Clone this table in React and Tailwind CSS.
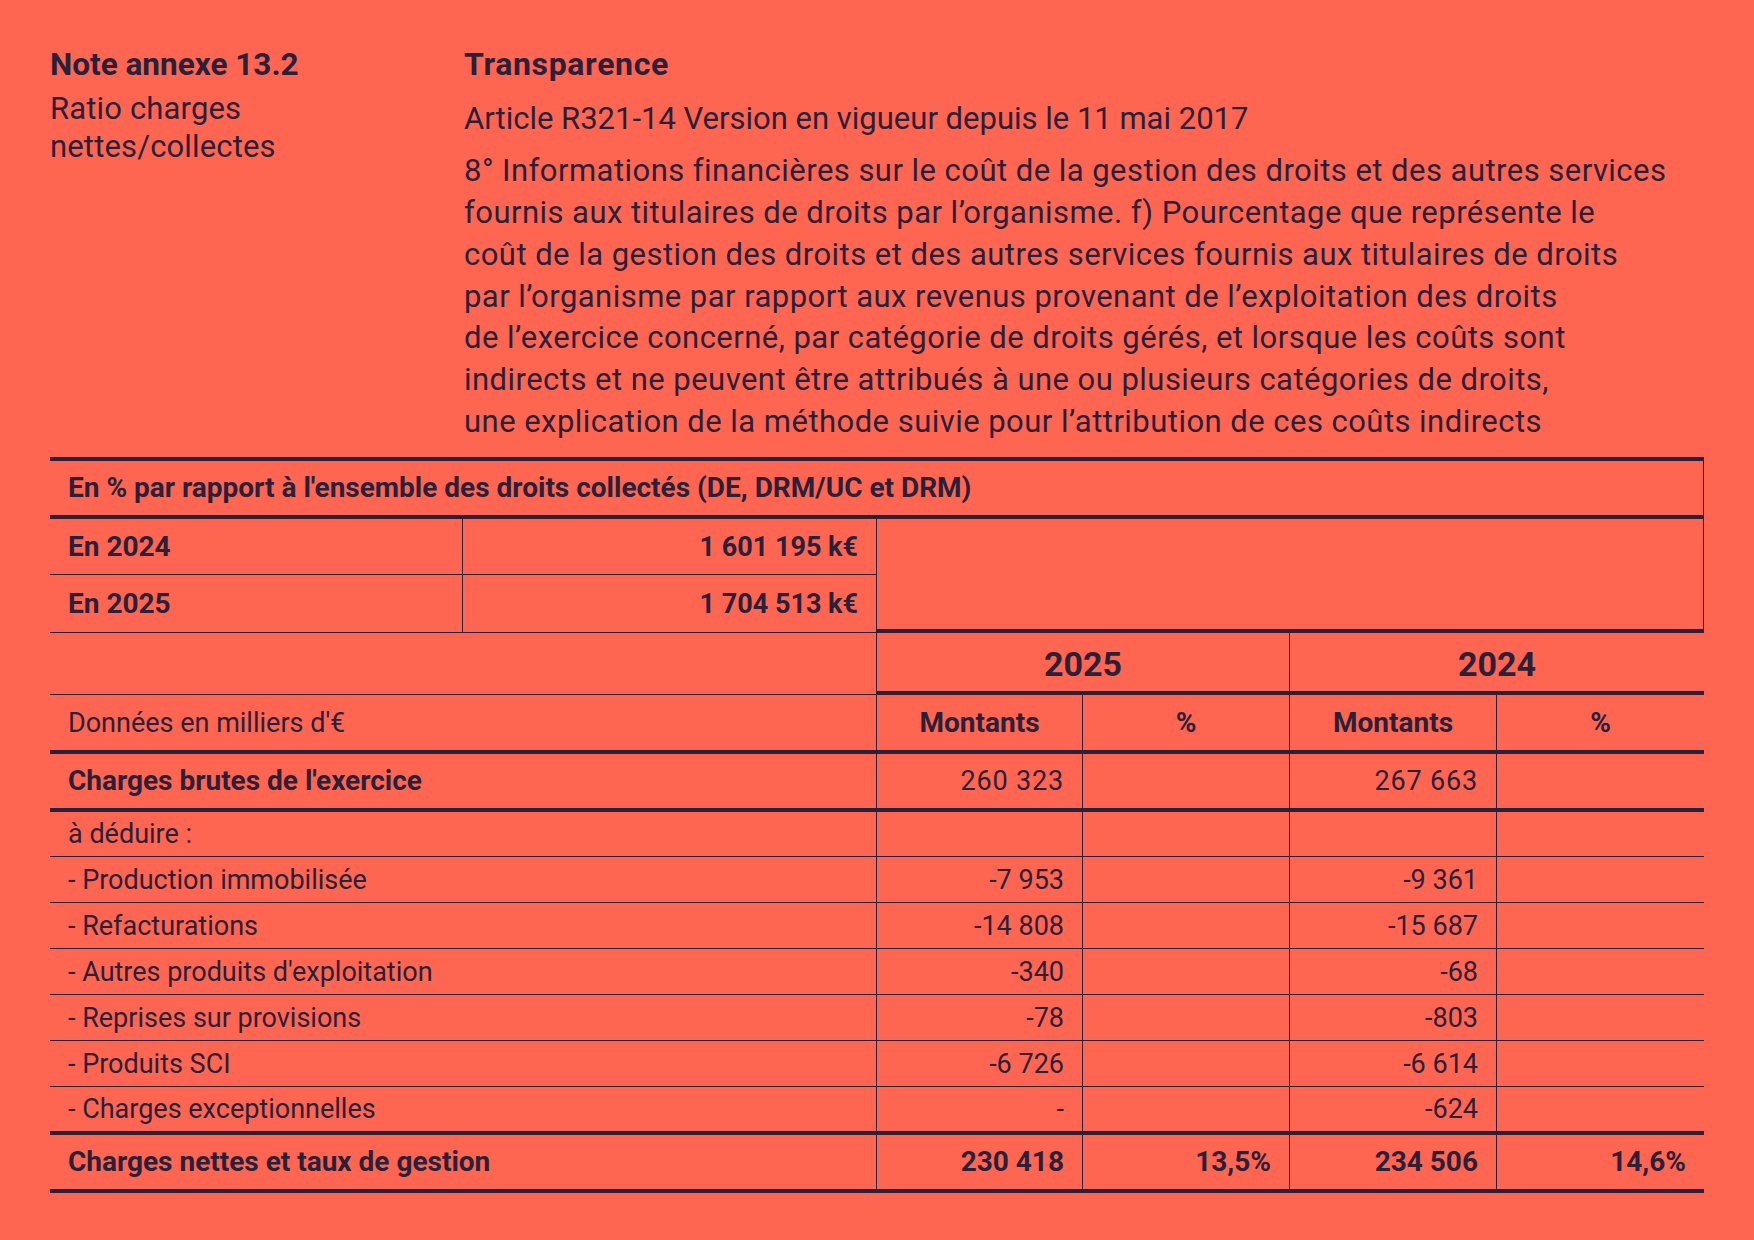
const LINES = [
  '8° Informations financières sur le coût de la gestion des droits et des autres services',
  'fournis aux titulaires de droits par l’organisme. f) Pourcentage que représente le',
  'coût de la gestion des droits et des autres services fournis aux titulaires de droits',
  'par l’organisme par rapport aux revenus provenant de l’exploitation des droits',
  'de l’exercice concerné, par catégorie de droits gérés, et lorsque les coûts sont',
  'indirects et ne peuvent être attribués à une ou plusieurs catégories de droits,',
  'une explication de la méthode suivie pour l’attribution de ces coûts indirects',
]

const DEDUCTIONS = [
  { label: '- Production immobilisée', a: '-7 953', b: '-9 361' },
  { label: '- Refacturations', a: '-14 808', b: '-15 687' },
  { label: "- Autres produits d'exploitation", a: '-340', b: '-68' },
  { label: '- Reprises sur provisions', a: '-78', b: '-803' },
  { label: '- Produits SCI', a: '-6 726', b: '-6 614' },
  { label: '- Charges exceptionnelles', a: '-', b: '-624', last: true },
]

function Cell({ children, className = '' }) {
  return <div className={`flex items-center border-[#2a2039] ${className}`}>{children}</div>
}

export default function App() {
  return (
    <div
      className="w-[1754px] h-[1240px] bg-[#ff6652] text-[#2a2039] px-[50px] pt-[44px]"
      style={{ fontFamily: 'Roboto, "Liberation Sans", sans-serif' }}
    >
      {/* Intro */}
      <div className="flex">
        <div className="w-[414px] shrink-0">
          <div className="text-[31.5px] leading-[41.3px] font-bold">Note annexe 13.2</div>
          <div className="text-[31px] leading-[38px] mt-[5px] tracking-[0.005em]">
            Ratio charges<br />nettes/collectes
          </div>
        </div>
        <div className="flex-1 text-[31px] leading-[41.7px] whitespace-nowrap">
          <div className="font-bold text-[32px] tracking-[0.02em]">Transparence</div>
          <div className="mt-[12px]">Article R321-14 Version en vigueur depuis le 11 mai 2017</div>
          <div className="mt-[11px] tracking-[0.015em]">
            {LINES.map(l => <div key={l}>{l}</div>)}
          </div>
        </div>
      </div>

      {/* Table */}
      <div
        className="mt-[15px] border-t-4 border-[#2a2039] grid grid-cols-[413px_414px_206px_207px_207px_207px] grid-rows-[58px_56px_58px_62px_59px_58px_45px_46px_46px_46px_46px_46px_48px_58px] text-[27px]"
      >
        <Cell className="col-span-6 border-b-4 border-r px-[18px] font-bold text-[28px]">
          En % par rapport à l'ensemble des droits collectés (DE, DRM/UC et DRM)
        </Cell>

        <Cell className="border-b border-r px-[18px] font-bold text-[28px]">En 2024</Cell>
        <Cell className="border-b border-r px-[18px] justify-end font-bold">1 601 195 k€</Cell>
        <Cell className="col-span-4 row-span-2 border-b-4 border-r" />
        <Cell className="border-b border-r px-[18px] font-bold text-[28px]">En 2025</Cell>
        <Cell className="border-b border-r px-[18px] justify-end font-bold">1 704 513 k€</Cell>

        <Cell className="col-span-2 border-b border-r" />
        <Cell className="col-span-2 border-b-4 border-r justify-center font-bold text-[34px] pt-[4px]">2025</Cell>
        <Cell className="col-span-2 border-b-4 justify-center font-bold text-[34px] pt-[4px]">2024</Cell>

        <Cell className="col-span-2 border-b-4 border-r px-[18px]">Données en milliers d'€</Cell>
        <Cell className="border-b-4 border-r justify-center font-bold text-[28px]">Montants</Cell>
        <Cell className="border-b-4 border-r justify-center font-bold text-[28px]">%</Cell>
        <Cell className="border-b-4 border-r justify-center font-bold text-[28px]">Montants</Cell>
        <Cell className="border-b-4 justify-center font-bold text-[28px]">%</Cell>

        <Cell className="col-span-2 border-b-4 border-r px-[18px] font-bold text-[28px]">Charges brutes de l'exercice</Cell>
        <Cell className="border-b-4 border-r px-[18px] justify-end tracking-[0.03em]">260 323</Cell>
        <Cell className="border-b-4 border-r" />
        <Cell className="border-b-4 border-r px-[18px] justify-end tracking-[0.03em]">267 663</Cell>
        <Cell className="border-b-4" />

        <Cell className="col-span-2 border-b border-r px-[18px]">à déduire :</Cell>
        <Cell className="border-b border-r" />
        <Cell className="border-b border-r" />
        <Cell className="border-b border-r" />
        <Cell className="border-b" />

        {DEDUCTIONS.map(r => {
          const b = r.last ? 'border-b-4' : 'border-b'
          return [
            <Cell key={r.label + 'l'} className={`col-span-2 ${b} border-r px-[18px]`}>{r.label}</Cell>,
            <Cell key={r.label + 'a'} className={`${b} border-r px-[18px] justify-end`}>{r.a}</Cell>,
            <Cell key={r.label + 'p'} className={`${b} border-r`} />,
            <Cell key={r.label + 'b'} className={`${b} border-r px-[18px] justify-end`}>{r.b}</Cell>,
            <Cell key={r.label + 'q'} className={b} />,
          ]
        })}

        <Cell className="col-span-2 border-b-4 border-r px-[18px] font-bold text-[28px]">Charges nettes et taux de gestion</Cell>
        <Cell className="border-b-4 border-r px-[18px] justify-end font-bold text-[28px]">230 418</Cell>
        <Cell className="border-b-4 border-r px-[18px] justify-end font-bold text-[28px]">13,5%</Cell>
        <Cell className="border-b-4 border-r px-[18px] justify-end font-bold text-[28px]">234 506</Cell>
        <Cell className="border-b-4 px-[18px] justify-end font-bold text-[28px]">14,6%</Cell>
      </div>
    </div>
  )
}
